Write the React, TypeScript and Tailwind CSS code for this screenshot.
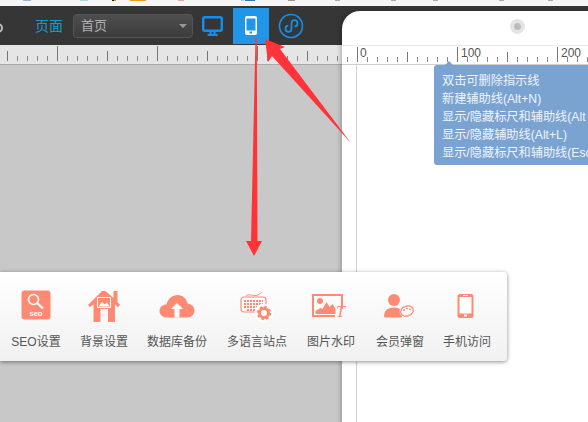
import React from "react";

const CJK = "font-['Liberation_Sans','Noto_Sans_CJK_SC',sans-serif]";
const C = "#ff8a73";

function Ruler({ from, to }: { from: number; to: number }) {
  const ticks: React.ReactNode[] = [];
  for (let v = -6; v < 60; v++) {
    const x = 57.5 + v * 10;
    if (x < from || x > to) continue;
    const y = v % 10 === 0 ? 46 : v % 5 === 0 ? 51 : 56;
    ticks.push(<line key={v} x1={x - from} x2={x - from} y1={y - 45} y2={16} stroke={v % 5 === 0 ? "#777" : "#888"} strokeWidth="1" />);
  }
  return (
    <svg width={to - from} height={20} className="block">
      {ticks}
    </svg>
  );
}

function Item({ label, w, children }: { label: string; w: string; children: React.ReactNode }) {
  return (
    <div className={`flex flex-col items-center shrink-0 ${w}`}>
      <div className="h-[38px] flex items-center justify-center">{children}</div>
      <div className="mt-[8px] text-[12px] leading-[18px] text-[#555] whitespace-nowrap">{label}</div>
    </div>
  );
}

const bits: [number, number, string][] = [
  [23, 8, "#8fb8dc"],
  [80, 8, "#9fd6e6"],
  [112, 2, "#222"],
  [114, 2, "#e08a20"],
  [130, 16, "#f29a1f"],
  [178, 6, "#f2a890"],
  [241, 3, "#a9c9ee"],
  [245, 10, "#3a6fc0"],
  [288, 7, "#999"],
  [335, 5, "#aaa"],
  [391, 5, "#aaa"],
  [433, 5, "#aaa"],
  [499, 5, "#aaa"],
  [548, 5, "#aaa"],
];

export default function App() {
  return (
    <div className={`relative w-[588px] h-[422px] overflow-hidden bg-[#c8c8c8] ${CJK}`}>
      {/* browser strip */}
      <div className="relative h-[6px] bg-[#f6f6f6]">
        {bits.map(([x, w, c]) => (
          <div key={x} className="absolute top-0 h-[1px]" style={{ left: x, width: w, background: c }} />
        ))}
      </div>

      {/* dark bar */}
      <div className="h-[39px] bg-[#363636] flex items-center relative">
        <div className="absolute left-[-7px] top-[17px] w-[10px] h-[10px] rounded-full border-2 border-[#bbb]" />
        <div className="ml-[35px] w-[28px] text-[14px] leading-[20px] text-[#1b96d8] whitespace-nowrap">页面</div>
        <div className="ml-[10px] w-[120px] h-[24px] rounded-[4px] border border-[#555] bg-gradient-to-b from-[#4e4e4e] to-[#3c3c3c] flex items-center justify-between pl-[7px] pr-[5px]">
          <span className="text-[13px] leading-[18px] text-[#b0b0b0]">首页</span>
          <span className="w-0 h-0 border-x-[4px] border-x-transparent border-t-[4px] border-t-[#999]" />
        </div>
        <svg className="ml-[9px]" width="21" height="20" viewBox="0 0 21 20" fill="none">
          <rect x="1.200" y="1.200" width="18.600" height="13.600" rx="1.500" stroke="#0f8ff0" strokeWidth="2.400" />
          <path d="M8.500 15.500v2.500M12.500 15.500v2.500M5.500 18.800h10" stroke="#0f8ff0" strokeWidth="2.200" />
        </svg>
        <div className="ml-[10px] w-[36px] h-[36px] bg-[#2196e8] flex items-center justify-center">
          <svg width="12" height="20" viewBox="0 0 12 20">
            <rect x="0" y="0" width="12" height="19" rx="2" fill="#fff" />
            <rect x="1.500" y="2.500" width="9" height="12" fill="#2196e8" />
            <rect x="4.500" y="15.500" width="2.500" height="2" fill="#2196e8" />
          </svg>
        </div>
        <svg className="ml-[9px] mt-[1px]" width="26" height="26" viewBox="0 0 26 26" fill="none" stroke="#1590e6">
          <circle cx="13" cy="13" r="11.500" strokeWidth="1.600" />
          <path d="M7.500 15.500c0 2 1.400 3.300 3 3.300 2 0 3-1.400 3-3v-5.600c0-1.600 1-3 3-3 1.600 0 3 1.300 3 3.200 0 1.800-1.300 3-2.900 3" strokeWidth="1.800" />
          <path d="M7.500 15.700c0-1.800 1.200-3 2.900-3" strokeWidth="1.800" />
        </svg>
      </div>

      {/* ruler */}
      <div className="h-[20px] bg-[#e5e5e5] border-b border-[#a9a9a9]">
        <Ruler from={0} to={342} />
      </div>

      {/* phone canvas */}
      <div className="absolute left-[342px] top-[11px] w-[260px] h-[420px] bg-white rounded-tl-[18px] shadow-[-2px_0_4px_rgba(0,0,0,0.2)]">
        <div className="absolute left-[168px] top-[8px] w-[15px] h-[15px] rounded-full bg-[#e4e4e4] flex items-center justify-center">
          <div className="w-[7px] h-[7px] rounded-full bg-[#bdbdbd]" />
        </div>
        <div className="absolute left-0 top-[34px] w-full h-[20px] border-t border-[#e8e8e8] border-b border-b-[#cfcfcf] bg-white">
          <Ruler from={342} to={588} />
          <span className="absolute left-[18px] top-[-1px] text-[12px] leading-[16px] text-[#555]">0</span>
          <span className="absolute left-[119px] top-[-1px] text-[12px] leading-[16px] text-[#555]">100</span>
          <span className="absolute left-[219px] top-[-1px] text-[12px] leading-[16px] text-[#555]">200</span>
        </div>
        <div className="absolute left-[14px] top-[54px] w-px h-[360px] bg-[#d0d0d0]" />
      </div>

      {/* guide tooltip */}
      <div className="absolute left-[434px] top-[65px] w-[154px] h-[100px] rounded-l-[3px] bg-[#7ba3d2] pl-[8px] pt-[7px] text-[12.2px] leading-[18px] text-[#eef3fa] whitespace-nowrap overflow-hidden">
        <div>双击可删除指示线</div>
        <div>新建辅助线(Alt+N)</div>
        <div>显示/隐藏标尺和辅助线(Alt</div>
        <div>显示/隐藏辅助线(Alt+L)</div>
        <div>显示/隐藏标尺和辅助线(Esc</div>
      </div>
      <div className="absolute left-[445px] top-[61px] w-0 h-0 border-x-[4px] border-x-transparent border-b-[4px] border-b-[#7ba3d2]" />

      {/* toolbar */}
      <div className="absolute left-0 top-[272px] w-[507px] h-[89px] rounded-r-[4px] bg-gradient-to-b from-white to-[#f1f1f1] shadow-[0_1px_4px_rgba(0,0,0,0.45)] flex pt-[15px] pl-[2px]">
        <Item label="SEO设置" w="w-[68px]">
          <svg width="30" height="30" viewBox="0 0 30 30" className="mt-[-3px]">
            <rect width="29" height="29" x="0.500" y="0.500" rx="3" fill={C} />
            <circle cx="12.500" cy="9.500" r="5" fill="none" stroke="#fff" strokeWidth="1.600" />
            <path d="M16 13l6 5.500" stroke="#fff" strokeWidth="2.200" />
            <text x="15" y="26" textAnchor="middle" fontSize="7.500" fontWeight="700" fill="#fff">seo</text>
          </svg>
        </Item>
        <Item label="背景设置" w="w-[68px]">
          <svg width="32" height="32" viewBox="0 0 32 32">
            <path d="M0 15L14 1h3.500l8 7V1h4v11l2.500 3-2 2-3-2.500V32h-7V19h-7.500v13H5.500V14.500L2 17z" fill={C} />
            <rect x="9" y="7" width="14" height="11" fill="#fff" />
            <rect x="10" y="8" width="12" height="9" fill={C} />
            <path d="M10.500 16.500l3.500-4.500 3 2.500 2-2 2.500 4z" fill="#fff" />
          </svg>
        </Item>
        <Item label="数据库备份" w="w-[78px]">
          <svg width="36" height="24" viewBox="0 0 36 24">
            <path d="M8 23.500c-4 0-7.500-2.500-7.500-6.500 0-3.800 3-6.500 7-6.500C9 4.500 13.500 1 18.500 1c5 0 9 3.500 10 8.500 4 .3 7 3.500 7 7s-3 7-7 7z" fill={C} />
            <path d="M18 9l6 6h-3.500v8.500h-5V15H12z" fill="#fff" />
          </svg>
        </Item>
        <Item label="多语言站点" w="w-[82px]">
          <svg width="34" height="33" viewBox="0 0 34 33" fill="none">
            <path d="M6 6c3-3 8 1 12-1 2-1 3-2 4-3" stroke={C} />
            <rect x="1" y="7" width="25" height="15" rx="3" stroke={C} strokeWidth="1.200" />
            <path d="M4 11h19M4 14h19M4 17h14M7 20h10" stroke={C} strokeWidth="1.800" strokeDasharray="2 1" />
            <circle cx="24" cy="23" r="9.500" fill="#fff" />
            <circle cx="24" cy="23" r="4.500" fill="none" stroke={C} strokeWidth="3" />
            <circle cx="24" cy="23" r="6.200" fill="none" stroke={C} strokeWidth="2" strokeDasharray="2.500 2.300" />
          </svg>
        </Item>
        <Item label="图片水印" w="w-[66px]">
          <svg width="38" height="25" viewBox="0 0 38 25" fill="none" className="overflow-visible">
            <path d="M30 15V1H1v21h22" stroke={C} strokeWidth="2" />
            <circle cx="8" cy="7" r="3" fill={C} />
            <path d="M3.500 20v-3l5-3 2 1 4-7 3 5 3-3 3 5v5z" fill={C} />
            <text x="24" y="23" fontSize="16" fontStyle="italic" fontFamily="Liberation Serif" fill={C}>T</text>
          </svg>
        </Item>
        <Item label="会员弹窗" w="w-[72px]">
          <svg width="32" height="24" viewBox="0 0 32 24">
            <circle cx="10" cy="6" r="6" fill={C} />
            <path d="M0 23c0-6 3-9.500 10-9.500 4 0 6 1 8 3.500v6.500H2z" fill={C} />
            <circle cx="23" cy="17" r="7.500" fill="#fff" />
            <ellipse cx="23" cy="17" rx="6.500" ry="5" fill="none" stroke={C} strokeWidth="1.300" transform="rotate(-20 23 17)" />
            <circle cx="20" cy="16" r="1" fill={C} />
            <circle cx="23" cy="14.500" r="1" fill={C} />
            <circle cx="26" cy="15.500" r="1" fill={C} />
          </svg>
        </Item>
        <Item label="手机访问" w="w-[62px]">
          <svg width="17" height="24" viewBox="0 0 17 24" className="ml-[-4px]">
            <rect width="16" height="24" x="0.500" rx="2.500" fill={C} />
            <rect x="2.500" y="3" width="12" height="16.500" fill="#fff" />
            <rect x="6" y="1" width="5" height="1" fill="#fff" />
            <rect x="7" y="20.500" width="3" height="2" fill="#fff" />
          </svg>
        </Item>
      </div>

      {/* annotation arrows */}
      <svg className="absolute left-0 top-0 pointer-events-none" width="588" height="422" viewBox="0 0 588 422">
        <path d="M255.500 38 L256.800 38 L257.500 241 L262 241 L254 256 L246 241 L251 241 Z" fill="#ff3338" />
        <path d="M265 39 L285 47 L280 49 L351 143 L272 56 L268 62 Z" fill="#ff3338" />
      </svg>
    </div>
  );
}
